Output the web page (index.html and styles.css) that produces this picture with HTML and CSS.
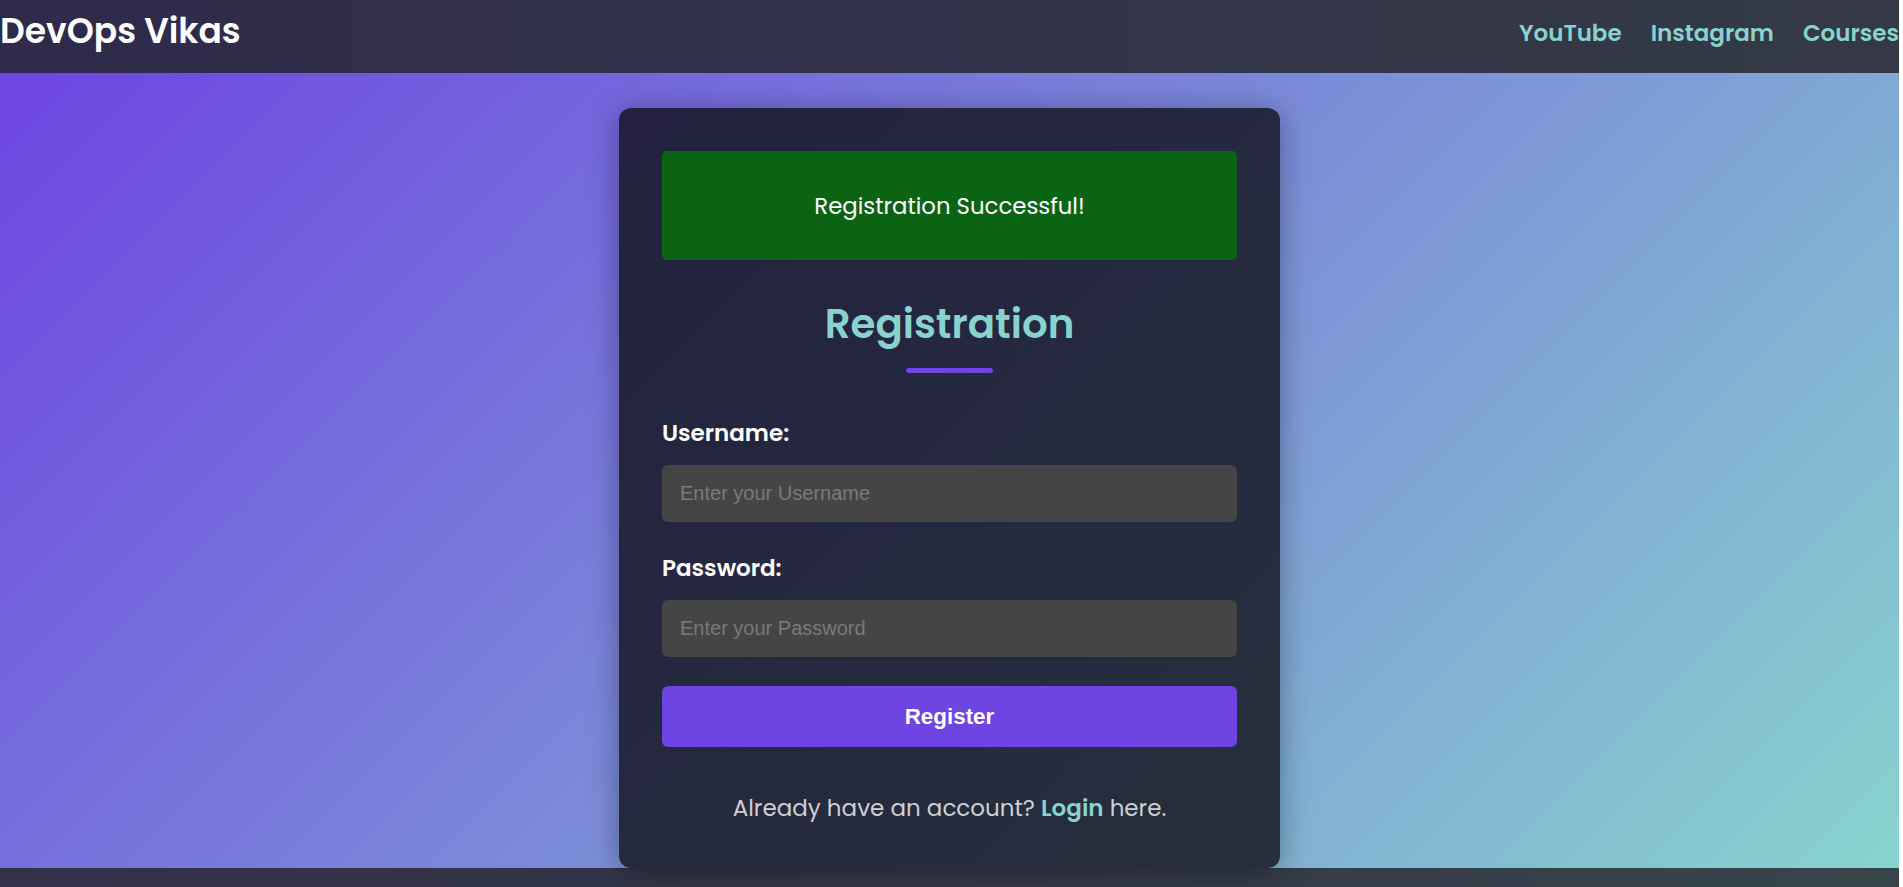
FILE: index.html
```html
<!DOCTYPE html>
<html lang="en">
<head>
<meta charset="UTF-8">
<title>Registration</title>
<link rel="stylesheet" href="styles.css">
</head>
<body>
<header class="topbar">
  <a class="logo" href="#">DevOps Vikas</a>
  <nav class="nav">
    <a href="#">YouTube</a>
    <a href="#">Instagram</a>
    <a href="#">Courses</a>
  </nav>
</header>
<main class="main">
  <section class="card">
    <div class="alert">Registration Successful!</div>
    <h2 class="title">Registration</h2>
    <div class="title-bar"></div>
    <form class="form">
      <div class="group">
        <label class="label" for="username">Username:</label>
        <input class="input" id="username" type="text" placeholder="Enter your Username">
      </div>
      <div class="group">
        <label class="label" for="password">Password:</label>
        <input class="input" id="password" type="password" placeholder="Enter your Password">
      </div>
      <button class="btn" type="button">Register</button>
    </form>
    <p class="switch">Already have an account? <a href="#">Login</a> here.</p>
  </section>
</main>
<footer class="footer"></footer>
</body>
</html>
```
FILE: styles.css
```css
* { box-sizing: border-box; }
html { background: #ffffff; }
body {
  margin: 0 4px 0 0;
  font-family: Poppins, "DejaVu Sans", sans-serif;
  color: #ffffff;
}
.topbar {
  height: 73px;
  display: flex;
  align-items: center;
  justify-content: space-between;
  background: linear-gradient(90deg, #2f2a4a 0%, #32334a 50%, #343a45 100%);
  overflow: hidden;
}
.logo {
  margin-bottom: 11px;
  color: #ffffff;
  text-decoration: none;
  font-weight: 600;
  font-size: 34.5px;
}
.nav {
  display: flex;
  gap: 29px;
  margin-right: 0;
  margin-bottom: 7px;
}
.nav a {
  color: #88d3ce;
  text-decoration: none;
  font-weight: 600;
  font-size: 23px;
}
.main {
  padding-top: 35px;
  display: flex;
  justify-content: center;
  background: linear-gradient(135deg, #6e45e2 0%, #88d3ce 100%);
}
.card {
  width: 661px;
  height: 760px;
  padding: 43px;
  border-radius: 12px;
  background: linear-gradient(135deg, #23213f 0%, #25293f 50%, #262f3d 100%);
  box-shadow: 0 4px 30px rgba(0, 0, 0, 0.35);
}
.alert {
  height: 109px;
  display: flex;
  align-items: center;
  justify-content: center;
  background: #0b6414;
  border-radius: 5px;
  font-size: 22.8px;
}
.title {
  margin: 40px 0 0;
  text-align: center;
  color: #88d3ce;
  font-size: 40.3px;
  font-weight: 600;
  line-height: 48px;
}
.title-bar {
  width: 87px;
  height: 5px;
  margin: 20px auto 0;
  border-radius: 3px;
  background: #6e45e2;
}
.form { margin-top: 47px; }
.group { margin-bottom: 33px; }
.label {
  display: block;
  height: 27px;
  line-height: 27px;
  font-size: 23px;
  font-weight: 600;
  margin-bottom: 18px;
}
.input {
  display: block;
  width: 100%;
  height: 57px;
  padding: 0 18px;
  border: none;
  border-radius: 6px;
  background: #454545;
  color: #ffffff;
  font-family: "Liberation Sans", Arial, sans-serif;
  font-size: 20px;
  outline: none;
}
.input::placeholder { color: #7a7a7a; }
.group:last-of-type { margin-bottom: 29px; }
.btn {
  display: block;
  width: 100%;
  height: 61px;
  border: none;
  border-radius: 6px;
  background: #6e45e2;
  color: #ffffff;
  font-family: "Liberation Sans", Arial, sans-serif;
  font-weight: 700;
  font-size: 22.4px;
}
.switch {
  margin: 44px 0 0;
  text-align: center;
  color: #cfcfcf;
  font-size: 23px;
}
.switch a {
  color: #88d3ce;
  font-weight: 600;
  text-decoration: none;
}
.footer {
  height: 60px;
  background: linear-gradient(90deg, #35304a 0%, #333547 40%, #37454a 100%);
}
```
